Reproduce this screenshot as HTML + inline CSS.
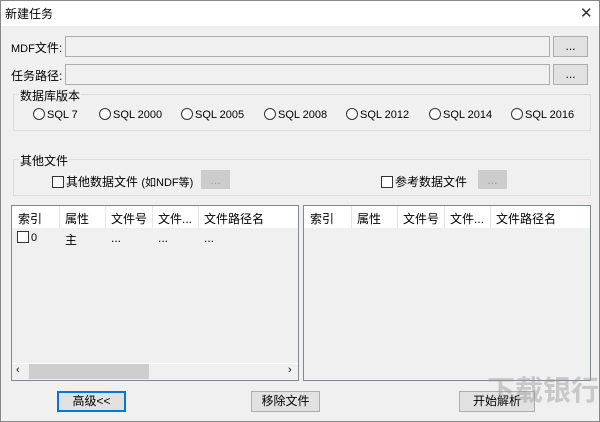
<!DOCTYPE html><html><head><meta charset="utf-8"><style>
*{box-sizing:border-box;margin:0;padding:0}
body{width:600px;height:422px;background:#f0f0f0;font-family:"Liberation Sans","Noto Sans CJK SC",sans-serif;font-size:12px;color:#000;position:relative;overflow:hidden;border:1px solid #888}
.a{position:absolute}
.title{left:0;top:0;width:598px;height:25px;background:#fff}
.inp{background:#f0f0f0;border:1px solid #adadad}
.btn{background:#e1e1e1;border:1px solid #adadad;text-align:center;line-height:18px}
.grp{border:1px solid #dcdcdc}
.lbl{background:#f0f0f0;padding:0 1px}
.rad{width:12px;height:12px;border:1px solid #333;border-radius:50%;display:inline-block;vertical-align:-2px;margin-right:2px;background:#fff}
.chk{width:12px;height:12px;border:1px solid #333;display:inline-block;vertical-align:-2px;margin-right:2px;background:#fff}
.list{border:1px solid #828790;background:#f0f0f0}
.hd{position:absolute;top:0;left:0;right:0;height:22px;background:#fff}
.hd span{position:absolute;top:4px}
.sep{position:absolute;top:0;height:22px;border-left:1px solid #e5e5e5}
.s{font-size:11px}
</style></head><body>
<div class="a title"></div>
<div class="a" style="left:4px;top:4px">新建任务</div>
<div class="a" style="left:579px;top:3px;font-size:15px;color:#333">✕</div>
<div class="a" style="left:10px;top:38px"><span class="s">MDF</span>文件:</div>
<div class="a inp" style="left:64px;top:35px;width:485px;height:21px"></div>
<div class="a btn" style="left:552px;top:35px;width:35px;height:21px">...</div>
<div class="a" style="left:10px;top:66px">任务路径:</div>
<div class="a inp" style="left:64px;top:63px;width:485px;height:21px"></div>
<div class="a btn" style="left:552px;top:63px;width:35px;height:21px">...</div>
<div class="a grp" style="left:12px;top:93px;width:578px;height:37px"></div>
<div class="a lbl" style="left:18px;top:86px">数据库版本</div>
<div class="a s" style="left:32px;top:107px"><span class="rad"></span>SQL 7</div>
<div class="a s" style="left:98px;top:107px"><span class="rad"></span>SQL 2000</div>
<div class="a s" style="left:180px;top:107px"><span class="rad"></span>SQL 2005</div>
<div class="a s" style="left:263px;top:107px"><span class="rad"></span>SQL 2008</div>
<div class="a s" style="left:345px;top:107px"><span class="rad"></span>SQL 2012</div>
<div class="a s" style="left:428px;top:107px"><span class="rad"></span>SQL 2014</div>
<div class="a s" style="left:510px;top:107px"><span class="rad"></span>SQL 2016</div>
<div class="a grp" style="left:12px;top:158px;width:578px;height:37px"></div>
<div class="a lbl" style="left:18px;top:151px">其他文件</div>
<div class="a" style="left:51px;top:172px"><span class="chk"></span>其他数据文件 <span class="s">(如NDF等)</span></div>
<div class="a btn" style="left:200px;top:169px;width:29px;height:19px;color:#999;border-color:#ccc;background:#ccc">...</div>
<div class="a" style="left:380px;top:172px"><span class="chk"></span>参考数据文件</div>
<div class="a btn" style="left:477px;top:169px;width:29px;height:19px;color:#999;border-color:#ccc;background:#ccc">...</div>
<div class="a list" style="left:10px;top:204px;width:288px;height:176px">
<div class="hd"><span style="left:6px">索引</span><span style="left:53px">属性</span><span style="left:99px">文件号</span><span style="left:146px">文件...</span><span style="left:192px">文件路径名</span>
<i class="sep" style="left:47px"></i><i class="sep" style="left:93px"></i><i class="sep" style="left:140px"></i><i class="sep" style="left:186px"></i></div>
<div class="a s" style="left:5px;top:25px"><span class="chk"></span>0</div>
<div class="a" style="left:53px;top:25px">主</div>
<div class="a" style="left:99px;top:25px">...</div>
<div class="a" style="left:146px;top:25px">...</div>
<div class="a" style="left:192px;top:25px">...</div>
<div class="a" style="left:0;top:157px;right:0;height:17px;background:#f0f0f0;border-top:1px solid #fff"></div>
<div class="a" style="left:4px;top:158px;font-size:11px">‹</div>
<div class="a" style="left:17px;top:158px;width:120px;height:15px;background:#cdcdcd"></div>
<div class="a" style="left:276px;top:158px;font-size:11px">›</div>
</div>
<div class="a list" style="left:302px;top:204px;width:288px;height:176px">
<div class="hd"><span style="left:6px">索引</span><span style="left:53px">属性</span><span style="left:99px">文件号</span><span style="left:146px">文件...</span><span style="left:192px">文件路径名</span>
<i class="sep" style="left:47px"></i><i class="sep" style="left:93px"></i><i class="sep" style="left:140px"></i><i class="sep" style="left:186px"></i></div>
</div>
<div class="a btn" style="left:56px;top:390px;width:69px;height:21px;border:2px solid #0078d7;line-height:17px">高级&lt;&lt;</div>
<div class="a btn" style="left:250px;top:390px;width:69px;height:21px">移除文件</div>
<div class="a btn" style="left:458px;top:390px;width:76px;height:21px">开始解析</div>
<div class="a" style="left:486px;top:368px;font-size:28px;color:rgba(150,150,150,.45);font-weight:bold">下载银行</div>
</body></html>
